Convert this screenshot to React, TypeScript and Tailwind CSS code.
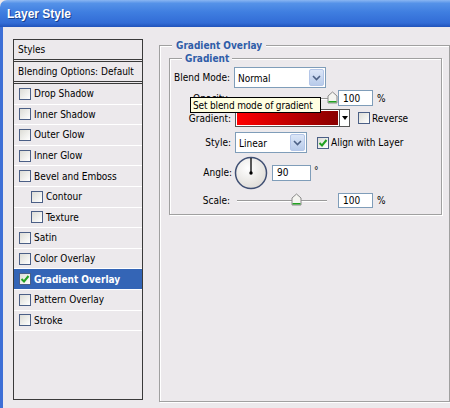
import React from "react";

const F = { fontFamily: '"DejaVu Sans Condensed", "Liberation Sans", sans-serif' };

function Check({ checked = false }: { checked?: boolean }) {
  return (
    <span className="inline-flex w-[12px] h-[12px] border border-[#4b5f86] bg-gradient-to-br from-[#dcdcd6] to-[#ffffff] items-center justify-center shrink-0">
      {checked && (
        <svg width="10" height="10" viewBox="0 0 10 10">
          <path d="M1.5 5 L4 7.5 L8.5 2" stroke="#21a121" strokeWidth="2" fill="none" />
        </svg>
      )}
    </span>
  );
}

function Thumb() {
  return (
    <svg width="11" height="13" viewBox="0 0 11 13">
      <path d="M1 5 L5.5 1 L10 5 L10 12 L1 12 Z" fill="#f4f4f0" stroke="#8a8a8a" strokeWidth="1" />
      <path d="M1.5 10 L9.5 10 L9.5 11.5 L1.5 11.5 Z" fill="#21a121" />
    </svg>
  );
}

function DropBtn() {
  return (
    <span className="w-[15px] h-full bg-gradient-to-b from-[#dce6f7] to-[#b8cbea] border border-[#b4c6e8] rounded-[2px] flex items-center justify-center">
      <svg width="9" height="6" viewBox="0 0 9 6">
        <path d="M1 1 L4.5 4.5 L8 1" stroke="#4d6185" strokeWidth="1.6" fill="none" />
      </svg>
    </span>
  );
}

const rows: { label: string; indent?: boolean; checked?: boolean; selected?: boolean }[] = [
  { label: "Drop Shadow" },
  { label: "Inner Shadow" },
  { label: "Outer Glow" },
  { label: "Inner Glow" },
  { label: "Bevel and Emboss" },
  { label: "Contour", indent: true },
  { label: "Texture", indent: true },
  { label: "Satin" },
  { label: "Color Overlay" },
  { label: "Gradient Overlay", checked: true, selected: true },
  { label: "Pattern Overlay" },
  { label: "Stroke" },
];

export default function App() {
  return (
    <div className="relative w-[450px] h-[408px] bg-[#ece9ec] flex flex-col overflow-hidden text-[10px] text-black" style={F}>
      {/* title bar */}
      <div className="h-[27px] shrink-0 rounded-tl-[7px] bg-[linear-gradient(to_bottom,#8ab6f2_0%,#5592e8_12%,#3f7ee0_45%,#326cd6_85%,#2153bb_100%)] flex items-center pl-[7px]">
        <span
          className="text-white font-bold text-[12px] [text-shadow:1px_1px_0_#1a3f8a]"
          style={{ fontFamily: '"Liberation Sans", Arial, sans-serif' }}
        >
          Layer Style
        </span>
      </div>
      <div className="flex flex-1">
        <div className="w-[3px] bg-[#3d6fd6] shrink-0" />
        <div className="flex flex-1 pl-[10px]">
          {/* left list */}
          <div className="mt-[12px] w-[130px] h-[361px] border border-[#3a3a3a] flex flex-col shrink-0">
            <div className="h-[22px] flex items-center pl-[4px] border-b-[3px] border-double border-[#3a3a3a]">Styles</div>
            <div className="h-[22px] flex items-center pl-[4px] border-b-[3px] border-double border-[#3a3a3a]">
              Blending Options: Default
            </div>
            {rows.map((r) => (
              <div
                key={r.label}
                className={
                  "h-[20.6px] flex items-center gap-[3px] border-b border-white " +
                  (r.indent ? "pl-[17px] " : "pl-[5px] ") +
                  (r.selected ? "bg-[#3465b6] text-white font-bold" : "")
                }
              >
                <Check checked={r.checked} />
                <span>{r.label}</span>
              </div>
            ))}
          </div>
          {/* right side */}
          <div className="ml-[16px] mt-[18px] w-[291px] h-[357px] border border-[#a0a0a0] shadow-[inset_1px_1px_0_#ffffff,1px_1px_0_#ffffff] flex flex-col pl-[9px] pr-[7px]">
            <div className="h-[12px] -mt-[7px] flex">
              <span className="ml-[3px] h-[13px] leading-[13px] bg-[#ece9ec] px-[4px] font-bold text-[#2f5da8]">
                Gradient Overlay
              </span>
            </div>
            <div className="mt-[7px] h-[157px] border border-[#a0a0a0] shadow-[inset_1px_1px_0_#ffffff,1px_1px_0_#ffffff] flex flex-col">
              <div className="h-[8px] -mt-[7px] flex">
                <span className="ml-[12px] h-[13px] leading-[13px] bg-[#ece9ec] px-[3px] font-bold text-[#2f5da8]">
                  Gradient
                </span>
              </div>
              <div className="mt-[7px]" />
              {/* blend mode */}
              <div className="flex items-center h-[21px]">
                <span className="w-[64px] text-right pr-[4px]">Blend Mode:</span>
                <div className="w-[92px] h-[21px] bg-white border border-[#7f9db9] flex items-center justify-between pl-[3px] p-[1px]">
                  <span className="pt-[2px]">Normal</span>
                  <DropBtn />
                </div>
              </div>
              {/* opacity */}
              <div className="flex items-center h-[16px] mt-[2px]">
                <span className="w-[64px] text-right pr-[4px]">Opacity:</span>
                <div className="w-[101px] relative h-[16px] flex items-center">
                  <div className="absolute left-[3px] right-[6px] top-[8px] h-[2px] border-t border-[#9a9a9a] border-b border-b-white" />
                  <div className="absolute right-[-3px] top-[1px]">
                    <Thumb />
                  </div>
                </div>
                <div className="ml-[3px] w-[35px] h-[16px] bg-white border border-[#7f9db9] pl-[4px] flex items-center">100</div>
                <span className="ml-[4px]">%</span>
              </div>
              {/* gradient */}
              <div className="flex items-center h-[18px] mt-[3px]">
                <span className="w-[65px] text-right pr-[4px]">Gradient:</span>
                <div className="w-[105px] h-[18px] border border-[#555] p-[1px] bg-white">
                  <div className="w-full h-full bg-gradient-to-r from-[#ff0000] to-[#8a0000]" />
                </div>
                <div className="w-[10px] h-[18px] bg-white border border-[#555] border-l-0 flex items-center justify-center">
                  <svg width="6" height="4" viewBox="0 0 6 4">
                    <path d="M0 0 L6 0 L3 4 Z" fill="#000" />
                  </svg>
                </div>
                <div className="ml-[8px] flex items-center gap-[2px]">
                  <Check />
                  <span>Reverse</span>
                </div>
              </div>
              {/* style */}
              <div className="flex items-center h-[21px] mt-[5px]">
                <span className="w-[65px] text-right pr-[4px]">Style:</span>
                <div className="w-[72px] h-[21px] bg-white border border-[#7f9db9] flex items-center justify-between pl-[3px] p-[1px]">
                  <span className="pt-[2px]">Linear</span>
                  <DropBtn />
                </div>
                <div className="ml-[10px] flex items-center gap-[2px]">
                  <Check checked />
                  <span>Align with Layer</span>
                </div>
              </div>
              {/* angle */}
              <div className="flex items-center h-[33px] mt-[3px]">
                <span className="w-[64px] text-right pr-[2px]">Angle:</span>
                <svg width="34" height="34" viewBox="0 0 34 34">
                  <defs>
                    <radialGradient id="dial" cx="40%" cy="35%" r="70%">
                      <stop offset="0%" stopColor="#ffffff" />
                      <stop offset="100%" stopColor="#dedbd6" />
                    </radialGradient>
                  </defs>
                  <circle cx="17" cy="17" r="15.5" fill="url(#dial)" stroke="#3f4f73" strokeWidth="1.5" />
                  <line x1="17" y1="17" x2="17" y2="2" stroke="#000" strokeWidth="1.3" />
                  <circle cx="17" cy="17" r="1.7" fill="#000" />
                </svg>
                <div className="ml-[4px] w-[39px] h-[16px] bg-white border border-[#7f9db9] pl-[4px] flex items-center">90</div>
                <span className="ml-[3px] self-start mt-[10px] leading-none">°</span>
              </div>
              {/* scale */}
              <div className="flex items-center h-[15px] mt-[4px]">
                <span className="w-[64px] text-right pr-[4px]">Scale:</span>
                <div className="w-[101px] relative h-[15px]">
                  <div className="absolute left-[3px] right-[8px] top-[7px] h-[2px] border-t border-[#9a9a9a] border-b border-b-white" />
                  <div className="absolute left-[57px] top-[0px]">
                    <Thumb />
                  </div>
                </div>
                <div className="ml-[3px] w-[35px] h-[15px] bg-white border border-[#7f9db9] pl-[4px] flex items-center">100</div>
                <span className="ml-[4px]">%</span>
              </div>
            </div>
          </div>
        </div>
      </div>
      {/* tooltip */}
      <div
        className="absolute left-[190px] top-[97px] w-[131px] h-[16px] bg-[#ffffe1] border border-black flex items-center pl-[2px] text-[10px] tracking-[-0.15px] text-black whitespace-nowrap overflow-hidden"
        style={F}
      >
        Set blend mode of gradient
      </div>
    </div>
  );
}
